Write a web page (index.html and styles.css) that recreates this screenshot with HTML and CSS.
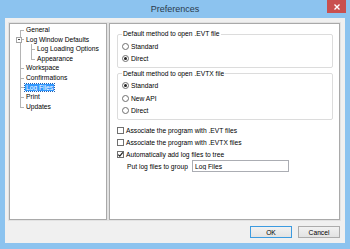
FILE: index.html
```html
<!DOCTYPE html>
<html lang="en">
<head>
    <meta charset="UTF-8">
    <title>Preferences</title>
    <link rel="stylesheet" href="styles.css">
</head>
<body>
    <div class="window">
        <div class="titlebar">
            <span class="title">Preferences</span>
            <button class="close" type="button">
                <svg width="6" height="6" viewBox="0 0 6 6"><path d="M0.5 0.5 L5.5 5.5 M5.5 0.5 L0.5 5.5" stroke="#fff" stroke-width="1.4"/></svg>
            </button>
        </div>
        <div class="content">
            <div class="panels">
                <div class="panel tree-panel">
                    <ul class="tree">
                        <li><span>General</span></li>
                        <li class="open">
                            <i class="toggle"></i><span>Log Window Defaults</span>
                            <ul class="sub">
                                <li><span>Log Loading Options</span></li>
                                <li><span>Appearance</span></li>
                            </ul>
                        </li>
                        <li><span>Workspace</span></li>
                        <li><span>Confirmations</span></li>
                        <li><span class="selected">Log Files</span></li>
                        <li><span>Print</span></li>
                        <li class="last"><span>Updates</span></li>
                    </ul>
                </div>
                <div class="panel page">
                    <fieldset class="group first">
                        <legend>Default method to open .EVT file</legend>
                        <label class="row"><i class="radio"></i>Standard</label>
                        <label class="row"><i class="radio on"></i>Direct</label>
                    </fieldset>
                    <fieldset class="group">
                        <legend>Default method to open .EVTX file</legend>
                        <label class="row"><i class="radio on"></i>Standard</label>
                        <label class="row"><i class="radio"></i>New API</label>
                        <label class="row"><i class="radio"></i>Direct</label>
                    </fieldset>
                    <div class="options">
                        <label class="row"><i class="check"></i>Associate the program with .EVT files</label>
                        <label class="row"><i class="check"></i>Associate the program with .EVTX files</label>
                        <label class="row"><i class="check on">
                            <svg width="7" height="7" viewBox="0 0 7 7"><path d="M1.2 3.6 L2.8 5.2 L5.8 1.4" fill="none" stroke="#222" stroke-width="1.2"/></svg>
                        </i>Automatically add log files to tree</label>
                        <div class="row group-row">
                            <span class="group-label">Put log files to group</span>
                            <input class="text-input" type="text" value="Log Files">
                        </div>
                    </div>
                </div>
            </div>
            <div class="buttons">
                <button class="btn default" type="button">OK</button>
                <button class="btn" type="button">Cancel</button>
            </div>
        </div>
    </div>
</body>
</html>
```

FILE: styles.css
```css
* {
    margin: 0;
    padding: 0;
    box-sizing: border-box;
}

body {
    width: 350px;
    height: 249px;
    overflow: hidden;
    font-family: 'Liberation Sans', Arial, sans-serif;
    font-size: 6.7px;
    color: #000;
}

.window {
    width: 350px;
    height: 249px;
    display: flex;
    flex-direction: column;
    background: #8cc3ef;
    padding: 0 5px 6px 5px;
}

.titlebar {
    height: 18px;
    display: flex;
    align-items: center;
    justify-content: center;
    position: relative;
}

.title {
    font-size: 9px;
    color: #2a3a4c;
    margin-top: -1px;
}

.close {
    position: absolute;
    right: -1px;
    top: 0;
    width: 19px;
    height: 13px;
    border: none;
    background: #c9504f;
    display: flex;
    align-items: center;
    justify-content: center;
}

.content {
    flex: 1;
    background: #f0f0f0;
    display: flex;
    flex-direction: column;
    padding: 5px 5px 5px 4px;
}

.panels {
    flex: 1;
    display: flex;
    gap: 2px;
}

.panel {
    background: #fff;
    border: 1px solid #a9a9a9;
    box-shadow: 0 0 0 1px #e2e2e2;
}

.tree-panel {
    width: 98px;
    padding: 1px 0 0 0;
}

.page {
    flex: 1;
    padding: 6px 6px 0 7px;
}

/* tree */
.tree {
    list-style: none;
    position: relative;
    padding-left: 15px;
}

.tree::before {
    content: '';
    position: absolute;
    left: 10px;
    top: 4.8px;
    height: 77px;
    border-left: 1px solid #b4b4b4;
}

.tree li {
    position: relative;
    line-height: 9.6px;
    white-space: nowrap;
}

.tree > li::before {
    content: '';
    position: absolute;
    left: -5px;
    top: 4.8px;
    width: 4px;
    border-top: 1px solid #b4b4b4;
}

.tree span {
    padding: 0 1px;
}

.tree .selected {
    background: #3399ff;
    color: #fff;
    outline: 1px dotted #2060b0;
    padding: 0 1px;
}

.toggle {
    position: absolute;
    left: -9px;
    top: 2px;
    width: 6px;
    height: 6px;
    border: 1px solid #a5a5a5;
    background: #fff;
    z-index: 1;
}

.toggle::after {
    content: '';
    position: absolute;
    left: 1px;
    top: 1.5px;
    width: 2px;
    border-top: 1px solid #444;
}

.sub {
    list-style: none;
    position: relative;
    padding-left: 11px;
}

.sub::before {
    content: '';
    position: absolute;
    left: 6px;
    top: 0;
    height: 15px;
    border-left: 1px solid #b4b4b4;
}

.sub li::before {
    content: '';
    position: absolute;
    left: -5px;
    top: 4.8px;
    width: 4px;
    border-top: 1px solid #b4b4b4;
}

/* groups */
.group {
    border: 1px solid #dcdcdc;
    border-radius: 2px;
    padding: 2px 4px 3px 4px;
    margin-bottom: 2px;
}

.group.first {
    padding-bottom: 2px;
}

.group legend {
    padding: 0 1px;
    line-height: 8px;
}

.row {
    display: flex;
    align-items: center;
    height: 12.3px;
    white-space: nowrap;
}

.radio {
    width: 7px;
    height: 7px;
    border: 1px solid #6f6f6f;
    border-radius: 50%;
    background: #fff;
    margin-right: 2px;
    display: flex;
    align-items: center;
    justify-content: center;
}

.radio.on::after {
    content: '';
    width: 3px;
    height: 3px;
    border-radius: 50%;
    background: #222;
}

.options {
    padding-top: 2px;
}

.options .row {
    height: 12px;
}

.check {
    width: 7px;
    height: 7px;
    border: 1px solid #707070;
    background: #fff;
    margin-right: 2px;
    display: flex;
    align-items: center;
    justify-content: center;
}

.check svg {
    flex: none;
}

.group-row {
    padding-left: 10px;
}

.group-label {
    width: 65px;
}

.text-input {
    width: 97px;
    height: 12px;
    border: 1px solid #abadb3;
    font-family: inherit;
    font-size: 6.7px;
    padding: 0 2px;
    color: #000;
    background: #fff;
    outline: none;
}

/* buttons */
.buttons {
    display: flex;
    justify-content: flex-end;
    gap: 6px;
    padding-top: 6px;
}

.btn {
    width: 42px;
    height: 12px;
    border: 1px solid #acacac;
    background: linear-gradient(#f2f2f2, #e3e3e3);
    font-family: inherit;
    font-size: 6.7px;
    color: #000;
}

.btn.default {
    border-color: #3c9be0;
}
```
